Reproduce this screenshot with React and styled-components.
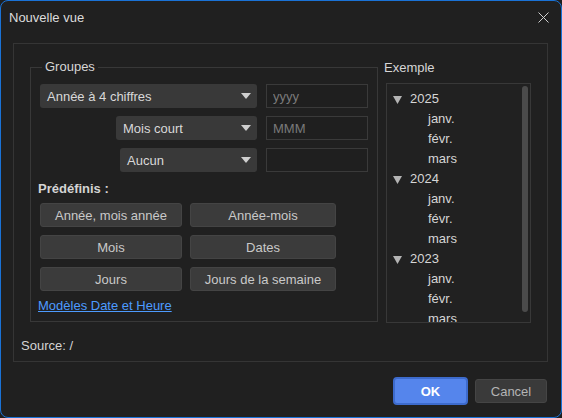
import styled, { createGlobalStyle } from "styled-components";

const GlobalStyle = createGlobalStyle`
  html, body {
    margin: 0;
    padding: 0;
    background: #1f1f1f;
  }
  body {
    font-family: "Liberation Sans", Arial, sans-serif;
    font-size: 13px;
  }
`;

const presets = [
  "Année, mois année",
  "Année-mois",
  "Mois",
  "Dates",
  "Jours",
  "Jours de la semaine",
];

const years = ["2025", "2024", "2023"];
const months = ["janv.", "févr.", "mars"];

function Caret() {
  return (
    <svg width="10" height="6" viewBox="0 0 10 6">
      <path d="M0 0 H10 L5 6 Z" fill="#cfcfcf" />
    </svg>
  );
}

function Select({ label, width }) {
  return (
    <SelectBox $width={width}>
      <span>{label}</span>
      <Caret />
    </SelectBox>
  );
}

export default function App() {
  return (
    <>
      <GlobalStyle />
      <Window>
        <TitleBar>
          <Title>Nouvelle vue</Title>
          <CloseButton>
            <svg width="11" height="11" viewBox="0 0 11 11">
              <path d="M0.5 0.5 L10.5 10.5 M10.5 0.5 L0.5 10.5" stroke="#d0d0d0" strokeWidth="1" />
            </svg>
          </CloseButton>
        </TitleBar>

        <Panel>
          <LeftColumn>
            <Groups>
              <Legend>Groupes</Legend>
              <FieldRow>
                <Select label="Année à 4 chiffres" width={217} />
                <TextInput placeholder="yyyy" />
              </FieldRow>
              <FieldRow>
                <Select label="Mois court" width={141} />
                <TextInput placeholder="MMM" />
              </FieldRow>
              <FieldRow>
                <Select label="Aucun" width={137} />
                <TextInput />
              </FieldRow>

              <SectionLabel>Prédéfinis :</SectionLabel>
              <PresetGrid>
                {presets.map((p) => (
                  <PresetButton key={p}>{p}</PresetButton>
                ))}
              </PresetGrid>
              <Link href="#">Modèles Date et Heure</Link>
            </Groups>
            <Source>Source: /</Source>
          </LeftColumn>

          <RightColumn>
            <ExampleLabel>Exemple</ExampleLabel>
            <TreeBox>
              {years.map((y) => (
                <div key={y}>
                  <YearRow>
                    <Arrow>
                      <svg width="9" height="8" viewBox="0 0 9 8">
                        <path d="M0 0 H9 L4.5 8 Z" fill="#b4b4b4" />
                      </svg>
                    </Arrow>
                    {y}
                  </YearRow>
                  {months.map((m) => (
                    <MonthRow key={m}>{m}</MonthRow>
                  ))}
                </div>
              ))}
              <ScrollThumb />
            </TreeBox>
          </RightColumn>
        </Panel>

        <Footer>
          <PrimaryButton>OK</PrimaryButton>
          <SecondaryButton>Cancel</SecondaryButton>
        </Footer>
      </Window>
    </>
  );
}

const Window = styled.div`
  box-sizing: border-box;
  width: 562px;
  height: 418px;
  background: #202020;
  border: 1px solid #1a72d6;
  border-radius: 8px;
  color: #d4d4d4;
  display: flex;
  flex-direction: column;
  overflow: hidden;
`;

const TitleBar = styled.div`
  height: 31px;
  display: flex;
  align-items: center;
  justify-content: space-between;
  padding: 0 12px 0 8px;
  flex-shrink: 0;
`;

const Title = styled.div`
  font-size: 13px;
  color: #dcdcdc;
  margin-top: 1px;
`;

const CloseButton = styled.div`
  display: flex;
  align-items: center;
  margin-top: 1px;
`;

const Panel = styled.div`
  box-sizing: border-box;
  margin: 11px 13px 0 12px;
  height: 319px;
  border: 1px solid #353535;
  display: flex;
  gap: 6px;
  padding: 15px 16px 0 16px;
`;

const LeftColumn = styled.div`
  width: 348px;
  display: flex;
  flex-direction: column;
`;

const Groups = styled.fieldset`
  box-sizing: border-box;
  margin: 0;
  height: 263px;
  border: 1px solid #383838;
  padding: 9px 9px 0 9px;
  display: flex;
  flex-direction: column;
  min-width: 0;
`;

const Legend = styled.legend`
  padding: 0 3px;
  margin-left: 2px;
  font-size: 13px;
  color: #d6d6d6;
  line-height: 16px;
`;

const FieldRow = styled.div`
  display: flex;
  justify-content: flex-end;
  gap: 9px;
  margin-bottom: 8px;
`;

const SelectBox = styled.div`
  box-sizing: border-box;
  width: ${(p) => p.$width}px;
  height: 24px;
  background: #393939;
  border-radius: 3px;
  display: flex;
  align-items: center;
  justify-content: space-between;
  padding: 0 6px 0 7px;
  color: #d8d8d8;
  font-size: 13px;
`;

const TextInput = styled.input`
  box-sizing: border-box;
  width: 102px;
  height: 24px;
  background: #1f1f1f;
  border: 1px solid #3a3a3a;
  border-radius: 0;
  padding: 0 6px;
  color: #d8d8d8;
  font-family: "Liberation Sans", Arial, sans-serif;
  font-size: 13px;
  outline: none;

  &::placeholder {
    color: #7a7a7a;
  }
`;

const SectionLabel = styled.div`
  font-weight: bold;
  color: #d4d4d4;
  margin: 1px 0 6px -2px;
  line-height: 16px;
`;

const PresetGrid = styled.div`
  display: grid;
  grid-template-columns: 142px 146px;
  column-gap: 8px;
  row-gap: 8px;
`;

const PresetButton = styled.button`
  box-sizing: border-box;
  height: 24px;
  background: #3b3b3b;
  border: 1px solid #444444;
  border-radius: 3px;
  color: #c9c9c9;
  font-family: "Liberation Sans", Arial, sans-serif;
  font-size: 13px;
  padding: 0;
`;

const Link = styled.a`
  margin: 7px 0 0 -2px;
  color: #4d9bff;
  text-decoration: underline;
  font-size: 13px;
  line-height: 16px;
  align-self: flex-start;
`;

const Source = styled.div`
  margin: 16px 0 0 -9px;
  line-height: 16px;
  color: #d4d4d4;
`;

const RightColumn = styled.div`
  width: 147px;
  display: flex;
  flex-direction: column;
`;

const ExampleLabel = styled.div`
  line-height: 16px;
  margin-top: 1px;
  color: #d6d6d6;
`;

const TreeBox = styled.div`
  position: relative;
  box-sizing: border-box;
  margin: 7px 0 0 2px;
  width: 145px;
  height: 240px;
  border: 1px solid #383838;
  background: #212121;
  padding-top: 5px;
  overflow: hidden;
`;

const YearRow = styled.div`
  height: 20px;
  line-height: 20px;
  display: flex;
  align-items: center;
  padding-left: 6px;
  color: #d6d6d6;
`;

const Arrow = styled.span`
  display: flex;
  align-items: center;
  width: 17px;
  margin-top: 1px;
`;

const MonthRow = styled.div`
  height: 20px;
  line-height: 20px;
  padding-left: 41px;
  color: #d6d6d6;
`;

const ScrollThumb = styled.div`
  position: absolute;
  top: 2px;
  right: 2px;
  width: 6px;
  height: 226px;
  border-radius: 3px;
  background: #4b4b4b;
`;

const Footer = styled.div`
  display: flex;
  justify-content: flex-end;
  align-items: center;
  gap: 7px;
  padding: 0 14px 0 0;
  margin-top: 15px;
`;

const PrimaryButton = styled.button`
  box-sizing: border-box;
  width: 75px;
  height: 28px;
  background: #5585ec;
  border: 2px solid #3d6bcd;
  border-radius: 4px;
  color: #ffffff;
  font-family: "Liberation Sans", Arial, sans-serif;
  font-weight: bold;
  font-size: 13px;
  padding: 0;
`;

const SecondaryButton = styled.button`
  box-sizing: border-box;
  width: 72px;
  height: 24px;
  background: #3a3a3a;
  border: 1px solid #454545;
  border-radius: 3px;
  color: #b4b4b4;
  font-family: "Liberation Sans", Arial, sans-serif;
  font-size: 13px;
  padding: 0;
`;
